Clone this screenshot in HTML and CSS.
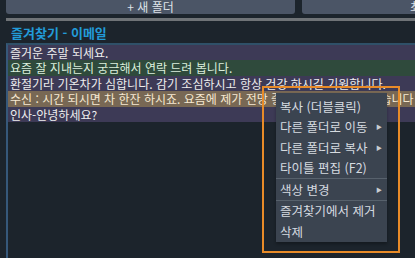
FILE: index.html
```html
<!DOCTYPE html>
<html lang="ko">
<head>
  <meta charset="UTF-8">
  <meta name="viewport" content="width=device-width, initial-scale=1.0">
  <title>즐겨찾기</title>
  <link rel="stylesheet" href="styles.css">
</head>
<body>
  <div class="toolbar">
    <button class="tool-btn">+ 새 폴더</button>
    <button class="tool-btn">최근 사용 목록</button>
  </div>
  <div class="divider"></div>
  <h1 class="folder-title">즐겨찾기 - 이메일</h1>

  <div class="list">
    <div class="row row-purple">즐거운 주말 되세요.</div>
    <div class="row row-green">요즘 잘 지내는지 궁금해서 연락 드려 봅니다.</div>
    <div class="row row-purple">환절기라 기온차가 심합니다. 감기 조심하시고 항상 건강 하시길 기원합니다.</div>
    <div class="row row-tan">수신 : 시간 되시면 차 한잔 하시죠. 요즘에 제가 전망 좋은 카페를 알게 되었습니다</div>
    <div class="row row-purple">인사-안녕하세요?</div>
  </div>

  <!-- right click menu + highlight box -->
  <div class="highlight"></div>
  <ul class="menu">
    <li class="menu-item">복사 (더블클릭)</li>
    <li class="menu-item">다른 폴더로 이동 <span class="arrow">&#9654;</span></li>
    <li class="menu-item">다른 폴더로 복사 <span class="arrow">&#9654;</span></li>
    <li class="menu-item">타이틀 편집 (F2)</li>
    <li class="menu-item sep">색상 변경 <span class="arrow">&#9654;</span></li>
    <li class="menu-item sep">즐겨찾기에서 제거</li>
    <li class="menu-item">삭제</li>
  </ul>
</body>
</html>
```

FILE: styles.css
```css
body {
  margin: 0;
  height: 258px;
  overflow: hidden;
  background-color: #1c242c;
  font-family: "Noto Sans CJK KR", "Noto Sans", sans-serif;
  font-size: 12px;
  position: relative;
}

.toolbar {
  display: flex;
  gap: 7px;
  padding-left: 6px;
  white-space: nowrap;
}

.tool-btn {
  flex: 0 0 289px;
  height: 14px;
  padding: 0;
  border: none;
  border-radius: 0 0 3px 3px;
  background-color: #4b5566;
  color: #dde2e8;
  font-family: inherit;
  font-size: 12px;
  line-height: 12px;
}

.divider {
  margin: 4px 0 0 6px;
  height: 3px;
  background-color: #6f7377;
}

.folder-title {
  margin: 0;
  padding-left: 11px;
  height: 22px;
  line-height: 24px;
  font-size: 13px;
  font-weight: bold;
  color: #229bd8;
}

.list {
  margin-left: 6px;
  height: 215px;
  border-top: 2px solid #2f5068;
  border-left: 2px solid #36587a;
}

.row {
  height: 15.4px;
  line-height: 15.4px;
  padding-left: 2px;
  white-space: nowrap;
  overflow: hidden;
  color: #eeeeee;
}

.row-purple {
  background-color: #3d3a56;
}

.row-green {
  background-color: #2f4a3c;
  color: #dcefdc;
}

.row-tan {
  background-color: #786854;
  color: #f6e8d2;
}

.highlight {
  position: absolute;
  left: 262px;
  top: 86px;
  width: 134px;
  height: 163px;
  border: 2px solid #e88b28;
}

.menu {
  position: absolute;
  left: 276px;
  top: 93px;
  width: 111px;
  margin: 0;
  padding: 3px 0 0;
  list-style: none;
  background-color: #3b4450;
  box-shadow: 0 2px 3px rgba(0, 0, 0, 0.3);
}

.menu-item {
  display: flex;
  justify-content: space-between;
  align-items: center;
  height: 20.5px;
  padding: 0 5px 0 4px;
  font-size: 12.5px;
  color: #d6dbe0;
  white-space: nowrap;
}

.menu-item.sep {
  border-top: 1px solid #57616c;
}

.arrow {
  font-size: 6px;
  color: #c8cdd2;
}
```
